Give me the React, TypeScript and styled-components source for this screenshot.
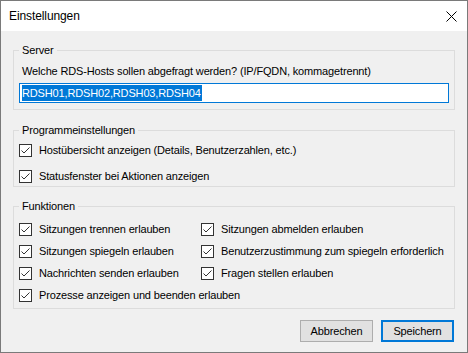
import React from "react";
import styled, { createGlobalStyle } from "styled-components";

const GlobalStyle = createGlobalStyle`
  html, body {
    margin: 0;
    padding: 0;
    background: #ffffff;
  }
  body {
    font-family: "Liberation Sans", Arial, sans-serif;
    font-size: 11px;
    letter-spacing: -0.15px;
    color: #000000;
  }
`;

const Window = styled.div`
  box-sizing: border-box;
  width: 468px;
  height: 353px;
  border: 1px solid #7a7a7a;
  display: flex;
  flex-direction: column;
  background: #f0f0f0;
`;

const TitleBar = styled.div`
  height: 30px;
  background: #ffffff;
  display: flex;
  align-items: center;
  justify-content: space-between;
  padding: 0 10px 0 8px;
  font-size: 12px;
  letter-spacing: -0.1px;
`;

const Body = styled.div`
  flex: 1;
  display: flex;
  flex-direction: column;
  padding: 11px 12px 0 12px;
`;

const Group = styled.fieldset<{ $gap?: number }>`
  margin: 0 0 ${(p) => p.$gap ?? 0}px 0;
  border: 1px solid #dcdcdc;
  padding: 0 5px;
  min-width: 0;
`;

const Legend = styled.legend`
  padding: 0 3px;
  line-height: 16px;
  height: 16px;
`;

const Prompt = styled.div`
  margin: 5px 0 4px 3px;
  line-height: 16px;
`;

const TextBox = styled.div`
  box-sizing: border-box;
  width: 430px;
  height: 20px;
  border: 1px solid #0078d7;
  background: #ffffff;
  display: flex;
  align-items: center;
  padding-left: 2px;
  margin-bottom: 6px;
`;

const Selection = styled.span`
  background: #0078d7;
  color: #ffffff;
  line-height: 16px;
  padding-right: 1px;
`;

const CheckList = styled.div<{ $gap: number; $top: number; $bottom: number }>`
  display: grid;
  grid-template-columns: 182px 1fr;
  row-gap: ${(p) => p.$gap}px;
  padding: ${(p) => p.$top}px 0 ${(p) => p.$bottom}px 0;
`;

const Row = styled.label<{ $wide?: boolean }>`
  display: flex;
  align-items: center;
  height: 16px;
  gap: 7px;
  white-space: nowrap;
  grid-column: ${(p) => (p.$wide ? "1 / 3" : "auto")};
`;

const Box = styled.span`
  box-sizing: border-box;
  width: 13px;
  height: 13px;
  border: 1px solid #333333;
  background: #ffffff;
  display: flex;
  flex-shrink: 0;
`;

const ButtonRow = styled.div`
  display: flex;
  justify-content: flex-end;
  gap: 8px;
  margin-top: 11px;
  padding-right: 1px;
`;

const Button = styled.button<{ $primary?: boolean }>`
  box-sizing: border-box;
  width: 73px;
  height: 22px;
  font: inherit;
  letter-spacing: inherit;
  color: #000000;
  background: #e1e1e1;
  border: ${(p) => (p.$primary ? "2px solid #0078d7" : "1px solid #adadad")};
  padding: 0;
`;

const Check: React.FC<{ children: React.ReactNode; wide?: boolean }> = ({
  children,
  wide,
}) => (
  <Row $wide={wide}>
    <Box>
      <svg width="11" height="11" viewBox="0 0 11 11">
        <polyline
          points="1.5,5.5 4,8 9.5,2.5"
          fill="none"
          stroke="#333333"
          strokeWidth="1"
        />
      </svg>
    </Box>
    <span>{children}</span>
  </Row>
);

const CloseIcon = () => (
  <svg width="11" height="11" viewBox="0 0 11 11">
    <path d="M0.5 0.5 L10.5 10.5 M10.5 0.5 L0.5 10.5" stroke="#000" strokeWidth="1" />
  </svg>
);

const App: React.FC = () => (
  <>
    <GlobalStyle />
    <Window>
      <TitleBar>
        <span>Einstellungen</span>
        <CloseIcon />
      </TitleBar>
      <Body>
        <Group $gap={12}>
          <Legend>Server</Legend>
          <Prompt>
            Welche RDS-Hosts sollen abgefragt werden? (IP/FQDN, kommagetrennt)
          </Prompt>
          <TextBox>
            <Selection>RDSH01,RDSH02,RDSH03,RDSH04</Selection>
          </TextBox>
        </Group>
        <Group $gap={11}>
          <Legend>Programmeinstellungen</Legend>
          <CheckList $gap={10} $top={4} $bottom={2}>
            <Check wide>Hostübersicht anzeigen (Details, Benutzerzahlen, etc.)</Check>
            <Check wide>Statusfenster bei Aktionen anzeigen</Check>
          </CheckList>
        </Group>
        <Group>
          <Legend>Funktionen</Legend>
          <CheckList $gap={6} $top={7} $bottom={5}>
            <Check>Sitzungen trennen erlauben</Check>
            <Check>Sitzungen abmelden erlauben</Check>
            <Check>Sitzungen spiegeln erlauben</Check>
            <Check>Benutzerzustimmung zum spiegeln erforderlich</Check>
            <Check>Nachrichten senden erlauben</Check>
            <Check>Fragen stellen erlauben</Check>
            <Check wide>Prozesse anzeigen und beenden erlauben</Check>
          </CheckList>
        </Group>
        <ButtonRow>
          <Button>Abbrechen</Button>
          <Button $primary>Speichern</Button>
        </ButtonRow>
      </Body>
    </Window>
  </>
);

export default App;
